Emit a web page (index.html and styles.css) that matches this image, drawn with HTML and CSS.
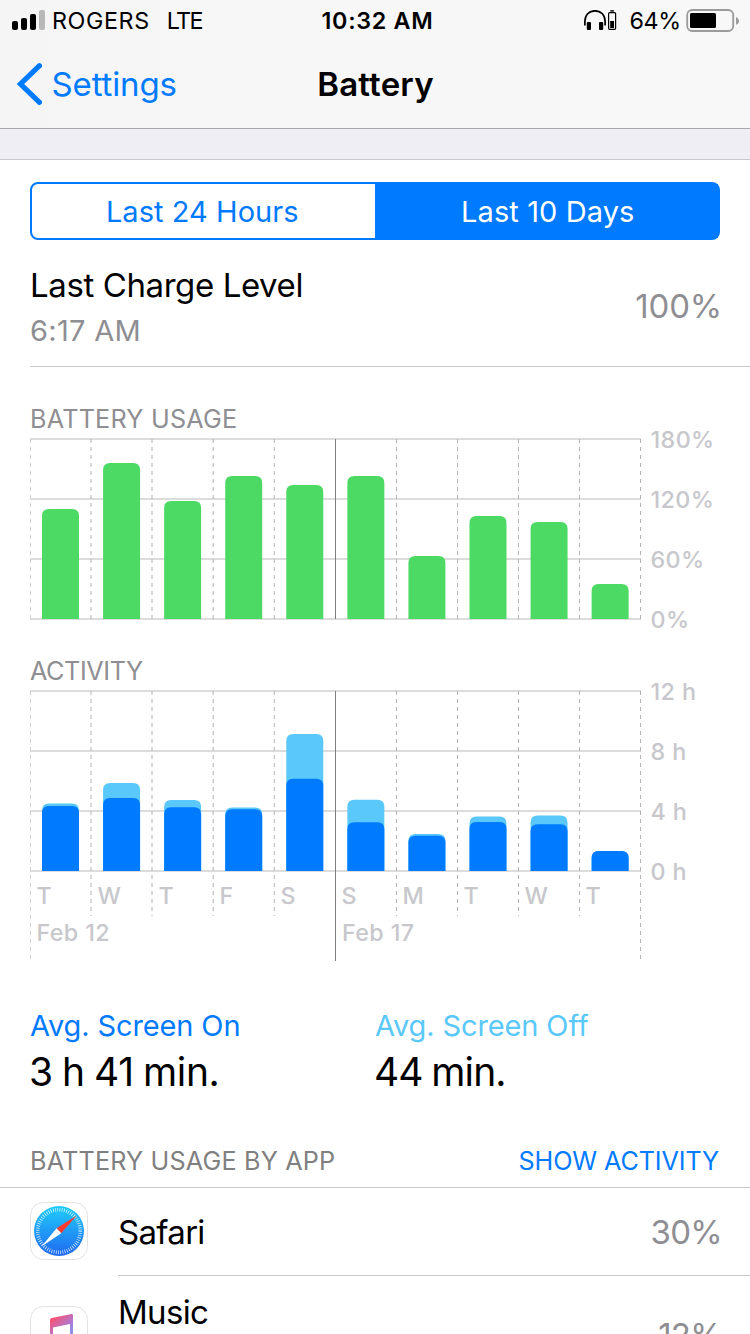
FILE: index.html
```
<!DOCTYPE html>
<html lang="en">
<head>
  <meta charset="UTF-8">
  <meta name="viewport" content="width=device-width, initial-scale=1.0">
  <title>Battery</title>
  <link rel="stylesheet" href="styles.css">
</head>
<body>

  <header>
    <div class="status">
      <div class="status-left">
        <svg width="33" height="20" viewBox="0 0 33 20">
          <rect x="0" y="11" width="6" height="9" rx="2"/>
          <rect x="9" y="8" width="6" height="12" rx="2"/>
          <rect x="18" y="4" width="6" height="16" rx="2"/>
          <rect x="27" y="0" width="6" height="20" rx="2" fill="#b8b8b8"/>
        </svg>
        <span class="carrier">ROGERS</span>
        <span class="network">LTE</span>
      </div>
      <div class="clock">10:32 AM</div>
      <div class="status-right">
        <svg width="33" height="21" viewBox="584 10 33 21">
          <path d="M584.9 25.5V21.5C584.9 15 588.8 10.8 595 10.8S605.1 15 605.1 21.5V25.5" fill="none" stroke="#000" stroke-width="1.7"/>
          <rect x="586.8" y="22" width="4.2" height="8" rx="1"/>
          <rect x="599" y="22" width="4.2" height="8" rx="1"/>
          <rect x="608.6" y="12.6" width="7" height="16.8" rx="1.2" fill="none" stroke="#000" stroke-width="1.2"/>
          <rect x="610.3" y="10.2" width="3.6" height="1.4"/>
          <rect x="610.2" y="21" width="3.8" height="7"/>
        </svg>
        <span class="percent">64%</span>
        <svg width="53" height="23" viewBox="686 9 53 23">
          <rect x="687.2" y="10" width="46" height="21" rx="5" fill="none" stroke="#9b9b9b" stroke-width="1.8"/>
          <rect x="690" y="13" width="26" height="15" rx="1.5"/>
          <path d="M736 17C738 18 739 19.300 739 20.900S738 23.800 736 24.800Z" fill="#9b9b9b"/>
        </svg>
      </div>
    </div>
    <nav>
      <a class="back">
        <svg width="26" height="44" viewBox="16 62 26 44">
          <path d="M39.500 65.700L20.500 84L39.500 102.300" fill="none" stroke="#007aff" stroke-width="5.200" stroke-linecap="round" stroke-linejoin="miter"/>
        </svg>
        <span>Settings</span>
      </a>
      <h1>Battery</h1>
    </nav>
  </header>

  <div class="gap"></div>

  <main>
    <div class="tabs">
      <div class="tab">Last 24 Hours</div>
      <div class="tab active">Last 10 Days</div>
    </div>

    <div class="charge">
      <div>
        <div class="charge-title">Last Charge Level</div>
        <div class="charge-time">6:17 AM</div>
      </div>
      <div class="value charge-value">100%</div>
    </div>

    <h2 class="usage-title">BATTERY USAGE</h2>
    <svg class="chart" id="usage" width="720" height="200" viewBox="30 434 720 200"></svg>

    <h2 class="activity-title">ACTIVITY</h2>
    <svg class="chart" id="activity" width="720" height="290" viewBox="30 686 720 290"></svg>

    <div class="averages">
      <div class="average">
        <div class="label on">Avg. Screen On</div>
        <div class="time">3 h 41 min.</div>
      </div>
      <div class="average">
        <div class="label off">Avg. Screen Off</div>
        <div class="time minutes">44 min.</div>
      </div>
    </div>

    <div class="list-head">
      <h2>BATTERY USAGE BY APP</h2>
      <a>SHOW ACTIVITY</a>
    </div>

    <div class="app">
      <svg class="icon" width="58" height="58" viewBox="0 0 58 58">
        <defs>
          <linearGradient id="blue" x1="0" y1="0" x2="0" y2="1">
            <stop offset="0" stop-color="#1fcdfb"/>
            <stop offset="1" stop-color="#2169f0"/>
          </linearGradient>
        </defs>
        <rect x=".5" y=".5" width="57" height="57" rx="13" fill="#fff" stroke="#e2e2e2"/>
        <circle cx="29" cy="29" r="25" fill="url(#blue)"/>
        <circle cx="29" cy="29" r="21.300" fill="none" stroke="#fff" stroke-width="3.600" stroke-dasharray=".7 1.530" opacity=".85"/>
        <path d="M46.800 13.500L26.600 26.300L31.200 31.300Z" fill="#ff3b30"/>
        <path d="M11.500 44.500L26.600 26.300L31.200 31.300Z" fill="#fff"/>
      </svg>
      <div class="app-row">
        <span class="name">Safari</span>
        <span class="value">30%</span>
      </div>
    </div>
    <div class="app tall">
      <svg class="icon" width="58" height="58" viewBox="0 0 58 58">
        <defs>
          <linearGradient id="note" x1="0" y1="0" x2=".6" y2="1">
            <stop offset="0" stop-color="#ff5566"/>
            <stop offset=".25" stop-color="#f3557d"/>
            <stop offset=".6" stop-color="#a77ddb"/>
            <stop offset="1" stop-color="#5ab5f5"/>
          </linearGradient>
        </defs>
        <rect x=".5" y=".5" width="57" height="57" rx="13" fill="#fff" stroke="#e2e2e2"/>
        <path d="M20 14Q20 12.500 21.500 12L41.500 8Q43 7.800 43 9.300V39Q43 45 37 45.500Q33 45.500 33 41.500Q33 38 37 37Q40 36.500 40 34V18L23 21.500V43Q23 49 17 49.500Q13 49.500 13 45.500Q13 42 17 41Q20 40.500 20 38Z" fill="url(#note)"/>
      </svg>
      <div class="app-row">
        <span class="name music">Music</span>
        <span class="value">12%</span>
      </div>
    </div>
  </main>

  <script>
    const columns = [30.5, 91, 152, 213.2, 274.3, 335.5, 396.5, 457.5, 518.5, 579.5, 640.5];
    const days = ['T', 'W', 'T', 'F', 'S', 'S', 'M', 'T', 'W', 'T'];

    // Bar heights in pixels, 180px is the full scale
    const usage = [110, 156, 118, 143, 134, 143, 63, 103, 97, 35];
    const screenTotal = [67.5, 88, 71, 63.5, 137, 71.2, 37, 54.5, 55.5, 20];
    const screenOn = [65, 73, 63.8, 61.8, 92.3, 48.7, 35.3, 49, 46.8, 20];

    function grid(top, labels) {
      let s = '';
      labels.forEach((label, i) => {
        const y = top + i * 60;
        s += `<rect x="30" y="${y}" width="611" height="2" class="line"/>`;
        s += `<text x="650.5" y="${y + 10}" class="axis">${label}</text>`;
      });
      return s;
    }

    function separators(top, bottom, edgeBottom) {
      return columns.map((x, i) => {
        const edge = i === 0 || i === 5 || i === 10;
        const y2 = edge ? edgeBottom : bottom;
        const type = i === 5 ? 'solid' : i === 0 ? 'dash first' : i < 5 ? 'dash soft' : 'dash';
        return `<line x1="${x}" x2="${x}" y1="${top}" y2="${y2}" class="${type}"/>`;
      }).join('');
    }

    function bars(values, base, color) {
      return values.map((h, i) => {
        const x = 42 + i * 61.07;
        const y = base - h;
        return `<path fill="${color}" d="M${x} ${base}V${y + 7}Q${x} ${y} ${x + 7} ${y}H${x + 30}Q${x + 37} ${y} ${x + 37} ${y + 7}V${base}Z"/>`;
      }).join('');
    }

    document.getElementById('usage').innerHTML =
      grid(438, ['180%', '120%', '60%', '0%']) +
      separators(439, 619, 619) +
      bars(usage, 619, '#4cd964');

    document.getElementById('activity').innerHTML =
      grid(690, ['12 h', '8 h', '4 h', '0 h']) +
      separators(691, 916, 961) +
      bars(screenTotal, 871, '#5ac8fa') +
      bars(screenOn, 871, '#007aff') +
      days.map((day, i) => `<text x="${36.5 + i * 61}" y="904" class="axis">${day}</text>`).join('') +
      '<text x="36.5" y="940.7" class="axis">Feb 12</text>' +
      '<text x="342" y="940.7" class="axis">Feb 17</text>';
  </script>
</body>
</html>
```
FILE: styles.css
```
* {
  box-sizing: border-box;
}
body {
  margin: 0;
  width: 750px;
  height: 1334px;
  overflow: hidden;
  background: #fff;
  color: #000;
  font-family: Inter, sans-serif;
  font-size: 33px;
}
svg {
  display: block;
  flex-shrink: 0;
}
h1, h2 {
  margin: 0;
}
header {
  height: 129px;
  background: linear-gradient(90deg, #f5f5f5, #f7f7f7 40%, #f8f8f8);
  border-bottom: 1px solid #a7a7ab;
}
.status {
  display: grid;
  grid-template-columns: 1fr auto 1fr;
  height: 41px;
  padding: 0 11px 0 12px;
  font-size: 23.3px;
  line-height: 41px;
}
.status-left,
.status-right {
  display: flex;
  align-items: center;
}
.status-left svg {
  margin-bottom: 1px;
}
.status-right {
  justify-content: flex-end;
}
.carrier {
  margin-left: 7px;
  letter-spacing: 0.6px;
}
.network {
  margin-left: 17px;
  letter-spacing: -1.6px;
}
.clock {
  margin: 0 -2px 0 2px;
  font-weight: 600;
  letter-spacing: 0.7px;
}
.percent {
  margin: 0 5px 0 12px;
  letter-spacing: -0.25px;
}
nav {
  display: grid;
  grid-template-columns: 1fr auto 1fr;
  align-items: center;
  height: 85px;
  padding-left: 16px;
}
.back {
  display: flex;
  align-items: center;
  gap: 9.5px;
  color: #007aff;
  letter-spacing: -0.13px;
}
h1 {
  margin-right: 15px;
  font-size: 33px;
  font-weight: 600;
  letter-spacing: 0.2px;
}
.gap {
  height: 31px;
  background: #efeef4;
  border-bottom: 1px solid #c8c7cc;
}
.tabs {
  display: flex;
  height: 58px;
  margin: 22px 30px 0;
  border: 2px solid #007aff;
  border-radius: 8px;
  background: linear-gradient(90deg, #fff 50%, #007aff 50%) border-box;
}
.tab {
  flex: 1;
  padding-right: 2px;
  color: #007aff;
  font-size: 29px;
  line-height: 55px;
  text-align: center;
  letter-spacing: 0.05px;
}
.tab.active {
  padding: 0 0 0 3px;
  background: #007aff;
  color: #fff;
  letter-spacing: 0.1px;
}
.charge {
  display: flex;
  justify-content: space-between;
  height: 127px;
  margin-left: 30px;
  padding: 25px 30px 0 0;
  border-bottom: 1px solid #c8c7cc;
}
.charge-title {
  line-height: 40px;
  letter-spacing: -0.4px;
}
.charge-time {
  margin-top: 7px;
  color: #8e8e93;
  font-size: 29px;
  line-height: 37px;
  letter-spacing: 0.3px;
}
.value {
  margin-right: -2px;
  color: #8e8e93;
  letter-spacing: -0.7px;
}
.charge-value {
  line-height: 82px;
  letter-spacing: -0.19px;
}
h2 {
  color: #8e8e93;
  font-size: 25.2px;
  font-weight: 400;
  line-height: 30px;
}
.usage-title {
  margin: 37px 0 0 30px;
  letter-spacing: 0.22px;
}
.activity-title {
  margin: 22px 0 0 30px;
  letter-spacing: -0.4px;
}
.chart {
  margin-left: 30px;
  overflow: visible;
}
.line {
  fill: #dcdcdc;
}
.dash {
  stroke: #b4b4b6;
  stroke-width: 1;
  stroke-dasharray: 4 4;
}
.soft {
  stroke: #bdbdbf;
  stroke-width: 1.2;
}
.first {
  stroke: #d2d2d4;
}
.solid {
  stroke: #7d7d7f;
  stroke-width: 1;
}
.axis {
  fill: #c7c7cc;
  font-size: 23.3px;
  font-weight: 500;
  letter-spacing: 0.4px;
}
.averages {
  display: flex;
  margin: 30px 30px 0;
}
.average {
  width: 345px;
}
.label {
  font-size: 29px;
  line-height: 39px;
  letter-spacing: -0.12px;
}
.on {
  color: #007aff;
}
.off {
  color: #5ac8fa;
}
.time {
  margin-left: -1px;
  font-size: 39px;
  line-height: 53px;
  letter-spacing: -0.35px;
  word-spacing: -1.3px;
}
.minutes {
  letter-spacing: -0.9px;
}
.list-head {
  display: flex;
  justify-content: space-between;
  height: 90px;
  padding: 48px 31px 0 30px;
  border-bottom: 1px solid #c8c7cc;
}
.list-head h2 {
  color: #808080;
  letter-spacing: 0.17px;
}
.list-head a {
  color: #007aff;
  font-size: 25.2px;
  line-height: 30px;
  letter-spacing: -0.12px;
}
.app {
  display: flex;
  align-items: center;
  gap: 30px;
  height: 88px;
  padding-left: 30px;
}
.icon {
  margin-bottom: 2px;
}
.app-row {
  display: flex;
  flex: 1;
  align-items: center;
  justify-content: space-between;
  height: 88px;
  padding-right: 30px;
  border-bottom: 1px solid #c8c7cc;
}
.name {
  letter-spacing: -0.7px;
}
.tall,
.tall .app-row {
  height: 119px;
}
.music {
  margin-bottom: 46px;
}
```
